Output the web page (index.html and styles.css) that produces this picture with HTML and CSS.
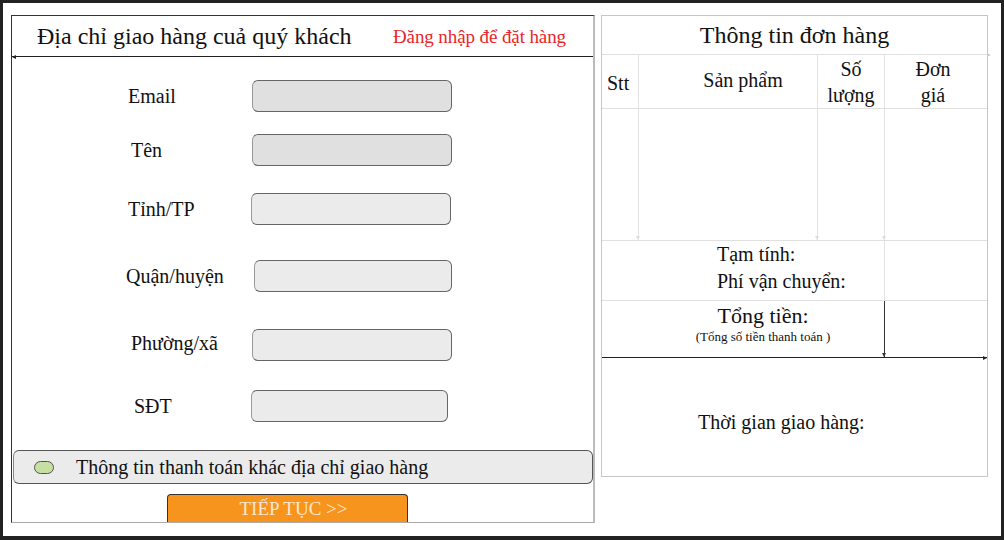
FILE: index.html
```html
<!DOCTYPE html>
<html lang="vi">
<head>
    <meta charset="UTF-8">
    <meta name="viewport" content="width=device-width, initial-scale=1.0">
    <title>Đặt hàng</title>
    <link rel="stylesheet" href="styles.css">
</head>
<body>
    <div class="screen">
        <section class="address">
            <header class="address-head">
                <h1>Địa chỉ giao hàng cuả quý khách</h1>
                <a class="login" href="#">Đăng nhập để đặt hàng</a>
            </header>
            <form class="address-form" action="#" method="post">
                <div class="field">
                    <label for="email">Email</label>
                    <input type="text" id="email" name="email" class="dark">
                </div>
                <div class="field">
                    <label for="ten">Tên</label>
                    <input type="text" id="ten" name="ten" class="dark">
                </div>
                <div class="field">
                    <label for="tinh">Tỉnh/TP</label>
                    <input type="text" id="tinh" name="tinh">
                </div>
                <div class="field">
                    <label for="quan">Quận/huyện</label>
                    <input type="text" id="quan" name="quan">
                </div>
                <div class="field">
                    <label for="phuong">Phường/xã</label>
                    <input type="text" id="phuong" name="phuong">
                </div>
                <div class="field">
                    <label for="sdt">SĐT</label>
                    <input type="text" id="sdt" name="sdt">
                </div>

                <label class="alt-billing">
                    <span class="toggle"></span>
                    Thông tin thanh toán khác địa chỉ giao hàng
                </label>

                <button type="submit" class="next">TIẾP TỤC &gt;&gt;</button>
            </form>
        </section>

        <section class="order">
            <h2>Thông tin đơn hàng</h2>
            <div class="order-row order-head">
                <div class="col-stt">Stt</div>
                <div class="col-name">Sản phẩm</div>
                <div>Số<br>lượng</div>
                <div class="col-price">Đơn<br>giá</div>
            </div>
            <div class="order-row order-body">
                <div></div>
                <div></div>
                <div></div>
                <div></div>
            </div>
            <div class="order-sub">
                <div class="sub-labels">
                    <p>Tạm tính:</p>
                    <p>Phí vận chuyển:</p>
                </div>
                <div class="sub-value"></div>
            </div>
            <div class="order-total">
                <div class="total-label">
                    <p class="total-title">Tổng tiền:</p>
                    <p class="total-note">(Tổng số tiền thanh toán )</p>
                </div>
                <div class="total-value"></div>
            </div>
            <div class="order-time">Thời gian giao hàng:</div>
        </section>
    </div>
</body>
</html>
```

FILE: styles.css
```css
body {
    margin: 0;
    background-color: #222;
    font-family: "Liberation Serif", "Times New Roman", serif;
    color: #111;
}

.screen {
    width: 998px;
    height: 533px;
    margin: 3px 3px 4px 3px;
    padding: 12px 0 0 8px;
    box-sizing: border-box;
    background-color: #fff;
    display: flex;
    align-items: flex-start;
    gap: 6px;
}

/* left panel */

.address {
    width: 584px;
    height: 508px;
    box-sizing: border-box;
    border-top: 1px solid #333;
    border-left: 1px solid #333;
    border-right: 2px solid #bbb;
    border-bottom: 1px solid #aaa;
    display: flex;
    flex-direction: column;
}

.address-head {
    position: relative;
    height: 42px;
    box-sizing: border-box;
    border-bottom: 1px solid #222;
    padding: 0 27px 0 25px;
    display: flex;
    align-items: center;
    justify-content: space-between;
}

.address-head::before {
    content: "";
    position: absolute;
    left: 0;
    bottom: -3px;
    border-right: 4px solid #222;
    border-top: 2px solid transparent;
    border-bottom: 2px solid transparent;
}

.address-head h1 {
    margin: 0;
    font-size: 24px;
    font-weight: normal;
}

.login {
    color: #e8262a;
    font-size: 19px;
    letter-spacing: -0.1px;
    text-decoration: none;
    margin-top: 1px;
}

.address-form {
    display: flex;
    flex-direction: column;
}

.field {
    display: flex;
    align-items: center;
    height: 32px;
    margin-top: 23px;
    padding-left: 116px;
}

.field label {
    width: 124px;
    font-size: 20px;
}

.field input {
    width: 200px;
    height: 32px;
    box-sizing: border-box;
    border: 1px solid #666;
    border-left-color: #999;
    border-radius: 6px;
    background-color: #ebebeb;
    font-family: inherit;
    font-size: 16px;
}

.field input.dark {
    background-color: #e0e0e0;
}

.field:nth-child(2) { margin-top: 22px; }
.field:nth-child(2) label { padding-left: 3px; width: 121px; }
.field:nth-child(3) { margin-top: 27px; }
.field:nth-child(3) input { margin-left: -1px; }
.field:nth-child(4) { margin-top: 35px; padding-left: 114px; }
.field:nth-child(4) input { margin-left: 4px; width: 198px; }
.field:nth-child(5) { margin-top: 37px; }
.field:nth-child(5) label { padding-left: 3px; width: 121px; position: relative; top: -2px; }
.field:nth-child(6) { margin-top: 29px; }
.field:nth-child(6) label { padding-left: 6px; width: 117px; }
.field:nth-child(6) input { width: 197px; }

.alt-billing {
    margin: 28px 0 0 1px;
    height: 34px;
    box-sizing: border-box;
    border: 1px solid #555;
    border-left-color: #888;
    border-radius: 6px;
    background-color: #ebebeb;
    display: flex;
    align-items: center;
    padding-left: 20px;
    font-size: 20px;
}

.toggle {
    width: 20px;
    height: 13px;
    box-sizing: border-box;
    border: 1px solid #555;
    border-radius: 7px;
    background-color: #c6e0a4;
    margin-right: 22px;
}

.next {
    margin: 10px 0 0 155px;
    width: 241px;
    height: 28px;
    border: 1px solid #333;
    border-bottom: none;
    border-radius: 4px 4px 0 0;
    background-color: #f7941d;
    color: #fde6cf;
    font-family: inherit;
    font-size: 19px;
    padding: 0 0 0 12px;
    cursor: pointer;
}

/* right panel */

.order {
    width: 387px;
    height: 462px;
    box-sizing: border-box;
    border: 1px solid #c6c6c6;
}

.order h2 {
    position: relative;
    margin: 0;
    height: 39px;
    box-sizing: border-box;
    border-bottom: 1px solid #e0e0e0;
    font-size: 24px;
    font-weight: normal;
    display: flex;
    align-items: center;
    justify-content: center;
}

.order h2::after {
    content: "";
    position: absolute;
    right: -4px;
    bottom: -3px;
    border-left: 4px solid #ccc;
    border-top: 2px solid transparent;
    border-bottom: 2px solid transparent;
}

.order-row {
    display: grid;
    grid-template-columns: 36px 179px 67px 1fr;
    border-bottom: 1px solid #e0e0e0;
}

.order-row > div + div {
    border-left: 1px solid #e3e3e3;
}

.order-head {
    height: 54px;
    box-sizing: border-box;
    font-size: 20px;
    line-height: 26px;
    text-align: center;
}

.order-head > div {
    display: flex;
    align-items: center;
    justify-content: center;
}

.order-head .col-name {
    padding: 0 0 3px 30px;
}

.order-head .col-price {
    padding-right: 6px;
}

.order-head .col-stt {
    justify-content: flex-start;
    padding-left: 5px;
    padding-top: 2px;
}

.order-body {
    height: 132px;
    box-sizing: border-box;
}

.order-body > div {
    position: relative;
}

.order-body > div:not(:first-child)::after {
    content: "";
    position: absolute;
    left: -3px;
    bottom: 0;
    border-top: 4px solid #ddd;
    border-left: 2px solid transparent;
    border-right: 2px solid transparent;
}

.order-sub {
    display: grid;
    grid-template-columns: 282px 1fr;
    height: 60px;
    box-sizing: border-box;
    border-bottom: 1px solid #e0e0e0;
}

.sub-labels {
    padding-left: 115px;
    font-size: 20px;
    line-height: 27px;
}

.sub-labels p,
.total-label p {
    margin: 0;
}

.sub-value {
    border-left: 1px solid #e3e3e3;
}

.order-total {
    position: relative;
    display: grid;
    grid-template-columns: 282px 1fr;
    height: 57px;
    box-sizing: border-box;
    border-bottom: 1px solid #222;
}

.order-total::after {
    content: "";
    position: absolute;
    right: 0;
    bottom: -3px;
    border-left: 4px solid #222;
    border-top: 2px solid transparent;
    border-bottom: 2px solid transparent;
}

.total-label {
    padding: 2px 0 0 40px;
    text-align: center;
}

.total-title {
    font-size: 22px;
    line-height: 26px;
}

.total-note {
    font-size: 13px;
    line-height: 16px;
}

.total-value {
    position: relative;
    border-left: 1px solid #333;
}

.total-value::after {
    content: "";
    position: absolute;
    left: -3px;
    bottom: 0;
    border-top: 4px solid #333;
    border-left: 2px solid transparent;
    border-right: 2px solid transparent;
}

.order-time {
    padding: 52px 0 0 96px;
    font-size: 20px;
    line-height: 24px;
}
```
